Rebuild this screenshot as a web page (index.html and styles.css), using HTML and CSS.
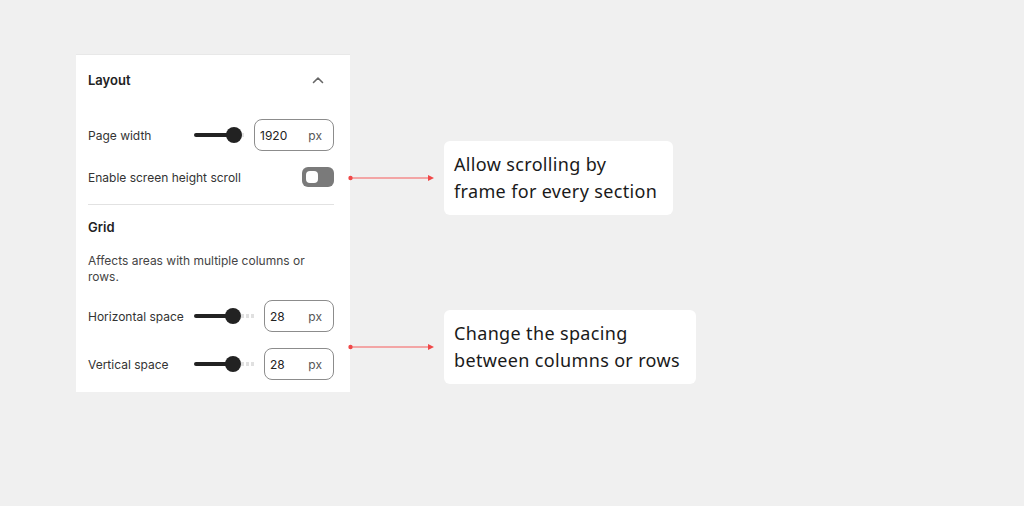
FILE: index.html
```html
<html>
<head>
<meta charset="UTF-8">
<meta name="viewport" content="width=device-width, initial-scale=1.0">
<title>Layout settings</title>
<link rel="stylesheet" href="styles.css">
</head>
<body>
<div class="canvas">
  <div class="panel">
    <div class="panel-header">
      <span class="panel-title">Layout</span>
      <svg class="chevron" width="24" height="24" viewBox="0 0 24 24"><path d="M7.5 14.5 L12 10 L16.5 14.5" fill="none" stroke="#666" stroke-width="1.6" stroke-linecap="round" stroke-linejoin="round"/></svg>
    </div>

    <div class="row">
      <span class="label">Page width</span>
      <svg class="slider" width="50" height="16" viewBox="0 0 50 16">
        <line x1="2" y1="8" x2="40" y2="8" stroke="#222" stroke-width="4" stroke-linecap="round"/>
        <line x1="47" y1="8" x2="50" y2="8" stroke="#e2e2e2" stroke-width="4"/>
        <circle cx="40" cy="8" r="8" fill="#222"/>
      </svg>
      <div class="num-input wide"><span>1920</span><span class="unit">px</span></div>
    </div>

    <div class="row toggle-row">
      <span class="label">Enable screen height scroll</span>
      <div class="toggle"><div class="knob"></div></div>
    </div>

    <div class="divider"></div>

    <div class="section-title">Grid</div>
    <p class="desc">Affects areas with multiple columns or rows.</p>

    <div class="row first">
      <span class="label">Horizontal space</span>
      <svg class="slider" width="62" height="16" viewBox="0 0 62 16">
        <line x1="2" y1="8" x2="39" y2="8" stroke="#222" stroke-width="4" stroke-linecap="round"/>
        <line x1="47" y1="8" x2="62" y2="8" stroke="#e0e0e0" stroke-width="4" stroke-dasharray="3 2"/>
        <circle cx="39" cy="8" r="8" fill="#222"/>
      </svg>
      <div class="num-input"><span>28</span><span class="unit">px</span></div>
    </div>

    <div class="row last">
      <span class="label">Vertical space</span>
      <svg class="slider" width="62" height="16" viewBox="0 0 62 16">
        <line x1="2" y1="8" x2="39" y2="8" stroke="#222" stroke-width="4" stroke-linecap="round"/>
        <line x1="47" y1="8" x2="62" y2="8" stroke="#e0e0e0" stroke-width="4" stroke-dasharray="3 2"/>
        <circle cx="39" cy="8" r="8" fill="#222"/>
      </svg>
      <div class="num-input"><span>28</span><span class="unit">px</span></div>
    </div>
  </div>

  <div class="notes">
    <div class="note">
      <svg class="arrow" width="86" height="8" viewBox="0 0 86 8">
        <line x1="2" y1="4" x2="82" y2="4" stroke="#f58c8c" stroke-width="1.5"/>
        <circle cx="2.5" cy="4" r="2.2" fill="#f04848"/>
        <path d="M80 1 L86 4 L80 7 Z" fill="#f04848"/>
      </svg>
      <div class="note-box">Allow scrolling by<br>frame for every section</div>
    </div>
    <div class="note second">
      <svg class="arrow" width="86" height="8" viewBox="0 0 86 8">
        <line x1="2" y1="4" x2="82" y2="4" stroke="#f58c8c" stroke-width="1.5"/>
        <circle cx="2.5" cy="4" r="2.2" fill="#f04848"/>
        <path d="M80 1 L86 4 L80 7 Z" fill="#f04848"/>
      </svg>
      <div class="note-box">Change the spacing<br>between columns or rows</div>
    </div>
  </div>
</div>
</body>
</html>
```

FILE: styles.css
```css
body {
  margin: 0;
  background-color: #f0f0f0;
  font-family: Inter, "Noto Sans", sans-serif;
  color: #333;
}

.canvas {
  display: flex;
  align-items: flex-start;
  padding: 54px 0 0 76px;
}

.panel {
  width: 274px;
  box-sizing: border-box;
  background-color: #fff;
  border-top: 1px solid #e8e8e8;
  padding: 0 16px 12px 12px;
}

.panel-header {
  display: flex;
  align-items: center;
  justify-content: space-between;
  height: 50px;
  margin-bottom: 14px;
}

.panel-title {
  font-size: 13px;
  font-weight: 600;
  color: #222;
}

.chevron {
  margin-right: 4px;
}

.row {
  display: flex;
  align-items: center;
  height: 32px;
  margin-bottom: 10px;
}

.row.toggle-row {
  margin-bottom: 11px;
}

.row.first {
  margin-bottom: 16px;
}

.row.last {
  margin-bottom: 0;
}

.label {
  font-size: 12px;
  width: 106px;
  flex-shrink: 0;
  white-space: nowrap;
}

.row .label + .toggle {
  margin-left: auto;
}

.slider {
  display: block;
}

.num-input {
  margin-left: auto;
  width: 70px;
  height: 32px;
  box-sizing: border-box;
  border: 1px solid #8c8c8c;
  border-radius: 8px;
  display: flex;
  align-items: center;
  justify-content: space-between;
  padding: 0 11px 0 5px;
  font-size: 12px;
  color: #222;
}

.num-input.wide {
  width: 80px;
}

.unit {
  color: #555;
}

.toggle {
  width: 32px;
  height: 20px;
  border-radius: 6px;
  background-color: #7a7a7a;
  display: flex;
  align-items: center;
  padding-left: 4px;
  box-sizing: border-box;
}

.knob {
  width: 12px;
  height: 12px;
  border-radius: 4px;
  background-color: #fff;
}

.divider {
  height: 1px;
  background-color: #e2e2e2;
}

.section-title {
  font-size: 13px;
  font-weight: 600;
  color: #222;
  line-height: 16px;
  margin-top: 14px;
}

.desc {
  font-size: 12px;
  line-height: 16px;
  color: #444;
  margin: 18px 0 15px;
  width: 230px;
}

.notes {
  display: flex;
  flex-direction: column;
  margin-left: -2px;
  padding-top: 87px;
}

.note {
  display: flex;
  align-items: center;
}

.note.second {
  margin-top: 95px;
}

.arrow {
  display: block;
  margin-right: 10px;
}

.note-box {
  background-color: #fff;
  border-radius: 6px;
  padding: 10px 16px 10px 10px;
  font-family: "Noto Sans", sans-serif;
  font-size: 18px;
  line-height: 27px;
  letter-spacing: 0.35px;
  color: #1a1a1a;
  white-space: nowrap;
}
```
